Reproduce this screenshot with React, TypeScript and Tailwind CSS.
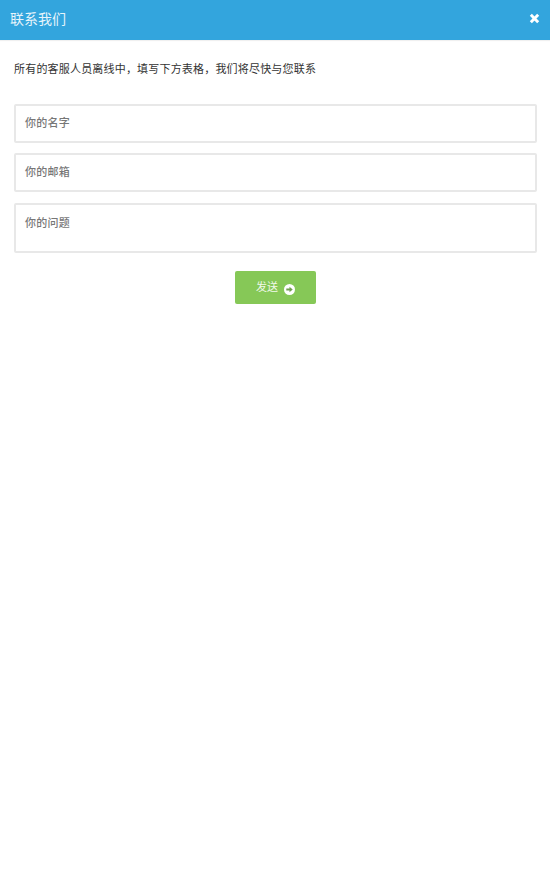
const cjk = "font-['Liberation_Sans','Noto_Sans_CJK_SC',sans-serif]";

const Field = ({ label, tall }: { label: string; tall?: boolean }) => (
  <div
    className={`rounded-[2px] border-2 border-[#e8e8e8] bg-white pl-[9px] text-[11px] font-medium leading-4 tracking-[0.25px] text-[#777] ${
      tall ? 'mt-[1px] h-[50px] pt-[10px]' : 'flex h-[39px] items-center pb-[1px]'
    }`}
  >
    {label}
  </div>
);

export default function App() {
  return (
    <div className={`min-h-[882px] bg-white ${cjk}`}>
      <header className="flex h-10 items-center justify-between bg-[#33a5dd] pl-[10px] pr-[10px] shadow-[0_1px_1px_rgba(0,0,0,0.06)]">
        <h1 className="mb-[1px] text-[14px] font-normal text-[#e6f4fb]">联系我们</h1>
        <svg viewBox="0 0 12 12" className="mb-[4px] h-[11px] w-[11px]" fill="none" stroke="white" strokeWidth="3.2">
          <path d="M2 2l8 8M10 2l-8 8" />
        </svg>
      </header>
      <main className="pl-[14px] pr-[13px]">
        <p className="mt-[21px] text-[11px] leading-4 tracking-[0.19px] text-[#333]">
          所有的客服人员离线中，填写下方表格，我们将尽快与您联系
        </p>
        <form className="mt-[27px] flex flex-col gap-[10px]">
          <Field label="你的名字" />
          <Field label="你的邮箱" />
          <Field label="你的问题" tall />
        </form>
        <div className="mt-[18px] flex justify-center">
          <button className="flex h-[33px] w-[81px] items-center justify-center gap-[6px] rounded-[2px] bg-[#86c857] text-[11px] text-[#f1f9ea]">
            发送
            <svg viewBox="0 0 12 12" className="mt-[4px] h-[11px] w-[11px]">
              <circle cx="6" cy="6" r="6" fill="white" />
              <path d="M2.5 5h3.5V3l3.5 3-3.5 3V7H2.5z" fill="#6f9f4c" />
            </svg>
          </button>
        </div>
      </main>
    </div>
  );
}
